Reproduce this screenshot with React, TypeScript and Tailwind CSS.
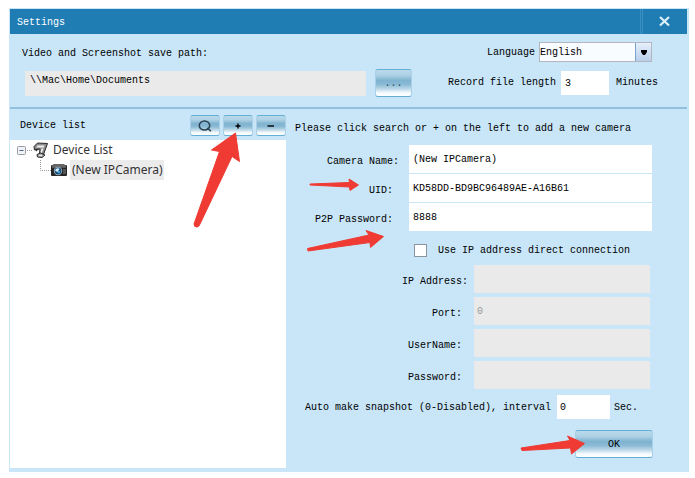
import { useState } from "react";
import type { ReactNode } from "react";

const glossy =
  "rounded-[3px] border border-x-[#a9d0e6] border-y-[#62aed6] bg-[linear-gradient(to_bottom,#b9daec_0%,#aed1e5_20%,#80b3d0_40%,#88b9d4_55%,#b9d6e6_72%,#f6fbfe_88%,#ffffff_100%)]";

const cameraFields = [
  { id: "camera-name", label: "Camera Name:", value: "(New IPCamera)", pad: "pr-[10px]" },
  { id: "uid", label: "UID:", value: "KD58DD-BD9BC96489AE-A16B61", pad: "pr-4" },
  { id: "p2p-password", label: "P2P Password:", value: "8888", pad: "pr-4" },
];

const directFields = [
  { id: "ip-address", label: "IP Address:", value: "", pad: "pr-[6px]" },
  { id: "port", label: "Port:", value: "0", pad: "pr-3" },
  { id: "username", label: "UserName:", value: "", pad: "pr-3" },
  { id: "password", label: "Password:", value: "", pad: "pr-3" },
];

interface ToolButtonProps {
  label: string;
  children: ReactNode;
}

const ToolButton = ({ label, children }: ToolButtonProps) => (
  <button aria-label={label} className={`flex h-[21px] w-[30px] items-center justify-center ${glossy}`}>
    {children}
  </button>
);

interface ArrowProps {
  className: string;
  width: number;
  height: number;
  d: string;
}

const Arrow = ({ className, width, height, d }: ArrowProps) => (
  <svg
    aria-hidden="true"
    className={`pointer-events-none absolute z-10 ${className}`}
    width={width}
    height={height}
    viewBox={`0 0 ${width} ${height}`}
  >
    <path d={d} fill="#ef3b33" stroke="#ef3b33" strokeWidth="1" strokeLinejoin="round" />
  </svg>
);

const TitleBar = () => (
  <header className="flex h-[25px] items-center bg-[#207db4] pl-[7px] text-white">
    <h1 className="flex-1 pt-0.5">Settings</h1>
    <div className="h-full w-[3px] border-x border-[#3b8fc0]" />
    <button aria-label="Close" className="flex h-full w-[44px] items-center justify-center pr-0.5">
      <svg width="11" height="11" viewBox="0 0 11 11" stroke="#dcf0fa" strokeWidth="2.2">
        <path d="M1 1 L10 9.5 M10 1 L1 9.5" />
      </svg>
    </button>
  </header>
);

const GeneralSettings = () => (
  <section className="border-b-2 border-[#93c0de] pt-2 pb-[10px]">
    <div className="flex h-5 items-center pr-[35px] pl-3">
      <label htmlFor="save-path" className="flex-1 pt-1">
        Video and Screenshot save path:
      </label>
      <label htmlFor="language" className="pt-0.5 pr-1">
        Language
      </label>
      <div className="relative h-5 w-[113px]">
        <select
          id="language"
          className="h-full w-full appearance-none border border-[#b3b6c0] bg-[#f9fcff] pt-0.5 outline-none"
        >
          <option>English</option>
        </select>
        <div className="pointer-events-none absolute inset-y-px right-px flex w-4 items-center justify-center border-l border-[#7ba3cf] bg-linear-to-b from-[#e6effa] to-[#b9d0ea]">
          <svg width="6" height="5" viewBox="0 0 6 5">
            <path d="M0 0 H6 V2 L4 5 H2 L0 2 Z" fill="#000" />
          </svg>
        </div>
      </div>
    </div>
    <div className="mt-[7px] flex h-7 items-center pr-[29px] pl-[15px]">
      <input
        id="save-path"
        readOnly
        defaultValue="\\Mac\Home\Documents"
        className="h-[25px] min-w-0 flex-1 bg-[#eaeaea] px-[5px] pb-1.5 outline-none"
      />
      <button className={`ml-[9px] h-7 w-[37px] pt-0.5 text-[#24465a] ${glossy}`}>...</button>
      <label htmlFor="record-length" className="pr-[5px] pl-9">
        Record file length
      </label>
      <input id="record-length" defaultValue="3" className="h-6 w-12 bg-white px-1 outline-none" />
      <span className="pl-[7px]">Minutes</span>
    </div>
  </section>
);

const DeviceTree = () => (
  <ul className="flex-1 bg-white font-['Noto_Sans','Open_Sans',sans-serif] text-[12px] leading-5 text-[#333]">
    <li>
      <div className="flex h-5 items-center pl-[7px]">
        <svg width="16" height="20" viewBox="0 0 16 20" fill="none">
          <rect x="0.5" y="6.5" width="8" height="8" rx="1" fill="#f1f3f6" stroke="#959aa3" />
          <path d="M2.5 10.5 H6.5" stroke="#4d6491" />
          <path d="M10 10.5 H16" stroke="#999" strokeDasharray="1 1" />
        </svg>
        <svg width="16" height="17" viewBox="0 0 16 17" fill="none">
          <path d="M1 4.5 L4.5 1 L14.5 1.5 L10.5 12.5 L6.5 11 L7 7 L1.5 8 Z" fill="#8d8d8d" stroke="#2b2b2b" />
          <path d="M4.5 3.5 L11.5 3.5 L10.8 5.5 L3.5 5.5 Z" fill="#efefef" />
          <path d="M8.5 6.5 L10.5 6.5 L8.7 11 L7.5 10.5 Z" fill="#f4f4f4" />
          <path d="M1.5 7 L6 6.5 L3.5 9.5 Z" fill="#333" />
          <path d="M4 12.5 L7.5 11 L12 13 L9 15.5 L4.5 15 Z" fill="#aaa" stroke="#2b2b2b" />
          <path d="M6 13.5 H9" stroke="#eee" />
        </svg>
        <span className="pl-1">Device List</span>
      </div>
      <ul>
        <li className="flex h-5 items-center pl-[30px]">
          <svg width="11" height="20" viewBox="0 0 11 20" fill="none" stroke="#999" strokeDasharray="1 1">
            <path d="M0.5 0 V10.5 H11" />
          </svg>
          <svg width="16" height="12" viewBox="0 0 16 12">
            <rect x="0" y="1" width="16" height="11" rx="1" fill="#262626" />
            <path d="M0.5 2.5 L2.5 0 H13 L15.5 2.5 Z" fill="#666" />
            <path d="M1 3 H15" stroke="#8a8a8a" />
            <rect x="12" y="5" width="3" height="5" fill="#555" />
            <circle cx="7" cy="7" r="4.2" fill="#a9bcc9" />
            <circle cx="7" cy="7" r="3.4" fill="#174d78" />
            <path d="M4.2 7 A2.8 2.8 0 0 1 8.5 4.7 L6.6 8 Z" fill="#d9f1fb" />
            <circle cx="7.8" cy="8" r="1.3" fill="#47a8dd" />
          </svg>
          <span className="ml-[3px] bg-[#ebebeb] px-0.5">(New IPCamera)</span>
        </li>
      </ul>
    </li>
  </ul>
);

const DevicePanel = () => (
  <section className="flex w-[276px] shrink-0 flex-col">
    <div className="flex h-[31px] items-center gap-[3px] pt-0.5 pl-[10px]">
      <h2 className="flex-1">Device list</h2>
      <ToolButton label="Search">
        <svg width="14" height="12" viewBox="0 0 14 12" fill="none" stroke="#28404f" strokeWidth="1.5">
          <ellipse cx="6.5" cy="5.5" rx="5.2" ry="4.6" />
          <path d="M9 8 L13 11.2" />
        </svg>
      </ToolButton>
      <div className="relative">
        <ToolButton label="Add camera">
          <svg width="6" height="6" viewBox="0 0 6 6" stroke="#000" strokeWidth="1.4">
            <path d="M0.5 3 H5.5 M3 0.5 V5.5" />
          </svg>
        </ToolButton>
        <Arrow
          className="top-[17px] left-[-32px]"
          width={52}
          height={98}
          d="M44.5 1 L20.5 18 L28.5 19.5 L3 92 Q3 95 6 95 Q8 95 9 92 L41 24.5 L48.5 29.5 Z"
        />
      </div>
      <ToolButton label="Remove camera">
        <svg width="8" height="6" viewBox="0 0 8 6" stroke="#000" strokeWidth="1.4">
          <path d="M0.5 3 H7" />
        </svg>
      </ToolButton>
    </div>
    <DeviceTree />
  </section>
);

const CameraForm = () => {
  const [direct, setDirect] = useState(false);

  return (
    <form className="min-w-0 flex-1 pb-[10px]" onSubmit={(e) => e.preventDefault()}>
      <p className="h-9 pt-0.5 pl-[9px] leading-9">Please click search or + on the left to add a new camera</p>

      <div className="relative flex flex-col gap-px pr-[35px]">
        {cameraFields.map((f) => (
          <div key={f.id} className="flex h-7 items-center">
            <label htmlFor={f.id} className={`w-[123px] pt-1.5 text-right ${f.pad}`}>
              {f.label}
            </label>
            <input
              id={f.id}
              defaultValue={f.value}
              className="h-full min-w-0 flex-1 bg-white px-1 outline-none"
            />
          </div>
        ))}
        <Arrow
          className="top-[32px] left-[22px]"
          width={54}
          height={16}
          d="M2 7 L41.5 5.5 L41 2 L50.5 8 L42 13.5 L41.5 10 L2 8 Z"
        />
        <Arrow
          className="top-[84px] left-[20px]"
          width={80}
          height={24}
          d="M1.5 19.5 L63 6 L60 1.5 L77.5 7.5 L64.5 18.5 L64 13.5 L2 22 Z"
        />
      </div>

      <div className="flex h-[34px] items-center gap-[11px] pt-1 pl-32">
        <input
          id="direct"
          type="checkbox"
          checked={direct}
          onChange={(e) => setDirect(e.target.checked)}
          className="size-[13px] appearance-none border border-[#8d959c] bg-white checked:bg-[#207db4]"
        />
        <label htmlFor="direct" className="pt-0.5">
          Use IP address direct connection
        </label>
      </div>

      <div className="flex flex-col gap-1 pr-[37px]">
        {directFields.map((f) => (
          <div key={f.id} className="flex h-7 items-center">
            <label htmlFor={f.id} className={`w-[188px] pt-1.5 text-right ${f.pad}`}>
              {f.label}
            </label>
            <input
              id={f.id}
              defaultValue={f.value}
              disabled={!direct}
              className="h-full min-w-0 flex-1 bg-white px-[3px] outline-none disabled:bg-[#eaeaea] disabled:text-[#999]"
            />
          </div>
        ))}
      </div>

      <div className="mt-1.5 flex h-6 items-center pl-[19px]">
        <label htmlFor="interval" className="pt-0.5 pr-[6px]">
          Auto make snapshot (0-Disabled), interval
        </label>
        <input id="interval" defaultValue="0" className="h-full w-[53px] bg-white px-[3px] outline-none" />
        <span className="pt-0.5 pl-1">Sec.</span>
      </div>

      <div className="mt-[11px] flex justify-end pr-[34px]">
        <div className="relative">
          <button className={`h-7 w-[78px] pt-0.5 ${glossy}`}>OK</button>
          <Arrow
            className="top-[4px] left-[-56px]"
            width={68}
            height={22}
            d="M2 14 L51 6.5 L48.5 2 L65.5 9.5 L52.5 20 L51.5 14 L3 16.5 Z"
          />
        </div>
      </div>
    </form>
  );
};

const App = () => {
  return (
    <div className="flex min-h-screen flex-col bg-white pt-2 pr-[6px] pb-[6px] pl-[9px] font-['Liberation_Mono','Noto_Sans_CJK_SC',monospace] text-[10px] leading-4 whitespace-nowrap text-black">
      <main className="flex flex-1 flex-col border-t border-r-2 border-b-4 border-l border-[#c8e6f8] bg-[#c8e6f8]">
        <TitleBar />
        <GeneralSettings />
        <div className="flex flex-1">
          <DevicePanel />
          <CameraForm />
        </div>
      </main>
    </div>
  );
};

export default App;
